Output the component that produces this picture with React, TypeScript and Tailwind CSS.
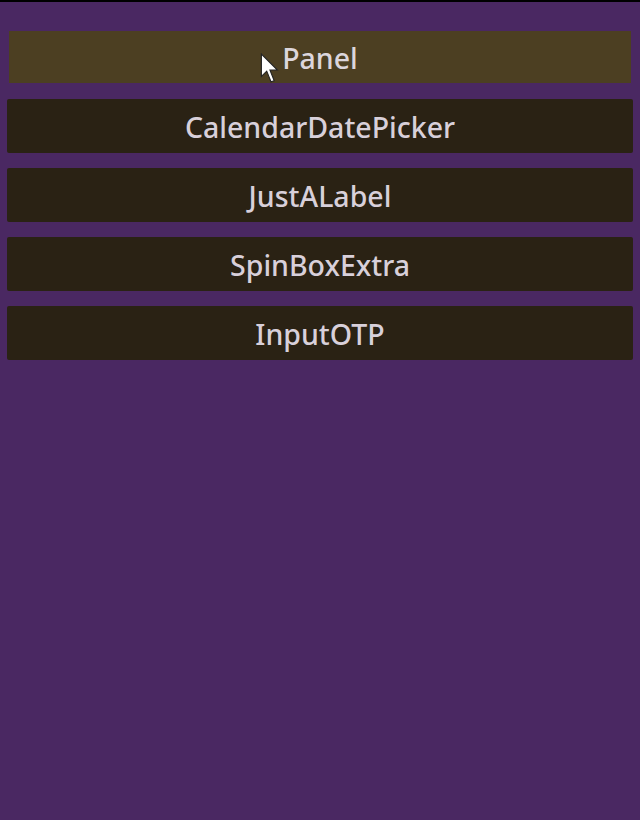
const items = ['CalendarDatePicker', 'JustALabel', 'SpinBoxExtra', 'InputOTP'];

export default function App() {
  return (
    <div className="relative h-[820px] w-[640px] overflow-hidden border-t-2 border-black bg-[#4a2862] font-['Noto_Sans',sans-serif]">
      <div className="flex flex-col gap-[15px] px-[7px] pt-[29px]">
        {/* hovered item */}
        <div className="mx-[2px] mb-[1px] flex h-[52px] items-center justify-center bg-[#4c3f22] pt-[3px] text-[28.5px] font-medium text-[#dcd6dc]">
          Panel
        </div>
        {items.map((label) => (
          <div
            key={label}
            className="flex h-[54px] items-center justify-center rounded-[2px] bg-[#2a2214] pt-[2px] text-[28.5px] font-medium text-[#d8d0da]"
          >
            {label}
          </div>
        ))}
      </div>

      {/* mouse cursor */}
      <svg className="absolute left-[260px] top-[51px]" width="22" height="32" viewBox="0 0 20 30">
        <path d="M1 1 L1 22 L6 17 L10 27 L13 26 L9 16 L16 16 Z" fill="#ffffff" stroke="#222" strokeWidth="1" />
      </svg>
    </div>
  );
}
